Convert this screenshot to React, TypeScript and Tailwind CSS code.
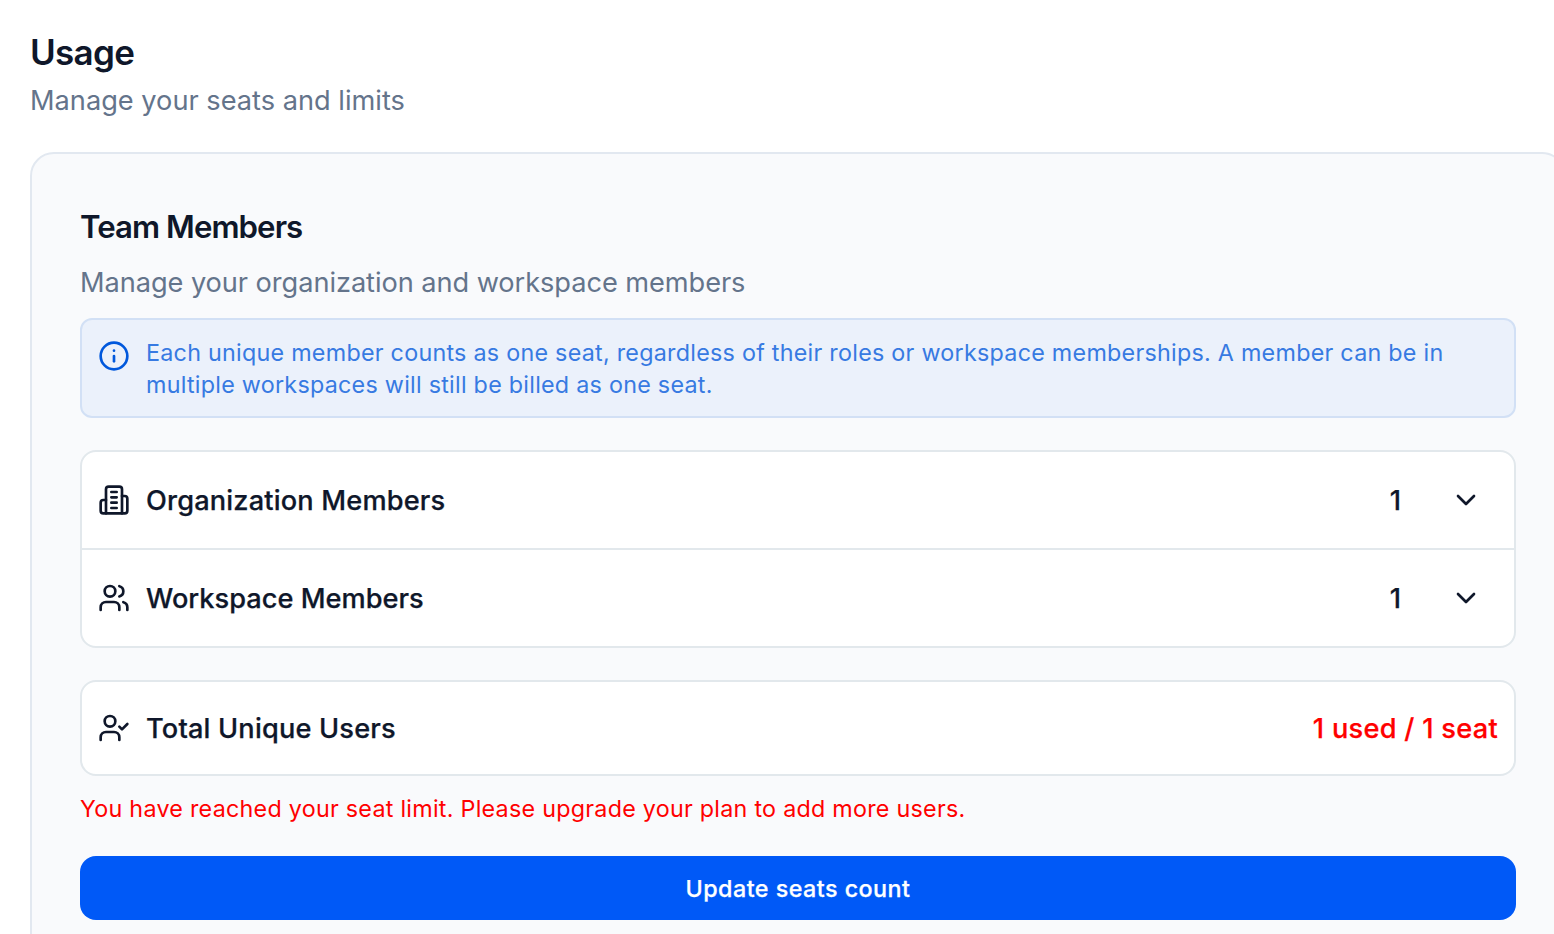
import type { ReactNode } from "react";
import { ChevronDown, Info, UserCheck, Users } from "lucide-react";

function OfficeIcon() {
  return (
    <svg className="size-8 shrink-0" viewBox="0 0 24 24" fill="none" stroke="currentColor" strokeWidth="2" strokeLinecap="round" strokeLinejoin="round">
      <path d="M6 22V4a2 2 0 0 1 2-2h8a2 2 0 0 1 2 2v18Z" />
      <path d="M6 12H4a2 2 0 0 0-2 2v6a2 2 0 0 0 2 2h2" />
      <path d="M18 9h2a2 2 0 0 1 2 2v9a2 2 0 0 1-2 2h-2" />
      <path d="M10 6h4M10 10h4M10 14h4M10 18h4" />
    </svg>
  );
}

function MemberRow({ icon, children }: { icon: ReactNode; children: ReactNode }) {
  return (
    <div className="flex h-24 items-center px-4">
      {icon}
      <div className="ml-4 mt-0.5 text-[27.2px] font-medium leading-10 [-webkit-text-stroke:0.25px]">{children}</div>
      <span className="ml-auto mr-[49px] mt-0.5 text-[27.2px] font-medium leading-10 [-webkit-text-stroke:0.25px]">1</span>
      <ChevronDown className="mr-4 size-8" strokeWidth={2} />
    </div>
  );
}

export default function App() {
  return (
    <main className="h-[934px] w-[1554px] overflow-hidden bg-white pl-[30px] pt-8 font-['Inter',sans-serif] text-[#0f172a]">
      <h1 className="text-[35px] font-semibold leading-10 tracking-[-0.7px]">Usage</h1>
      <p className="mt-[9px] text-[27.2px] leading-10 text-[#64748b]">Manage your seats and limits</p>
      <section className="mt-[31px] h-[900px] w-[1536px] rounded-3xl border-2 border-[#e2e8f0] bg-[#f9fafc] px-12 pt-12">
        <div className="w-[1436px]">
          <h2 className="mt-[3px] text-[31.2px] font-semibold leading-[44px] tracking-[-0.93px]">Team Members</h2>
          <p className="mt-[14px] text-[27.2px] leading-10 tracking-[-0.06px] text-[#64748b]">Manage your organization and workspace members</p>
          <div className="mt-[15px] flex h-[100px] rounded-xl border-2 border-[#d2e0f5] bg-[#ebf1fb] px-4 pt-4">
            <Info className="mt-[4px] size-8 shrink-0 text-[#0058dc]" />
            <p className="ml-4 mt-px whitespace-nowrap text-[23.3px] leading-8 tracking-[0.26px] text-[#377ae2]">
              Each unique member counts as one seat, regardless of their roles or workspace memberships. A member can be in
              <br />
              multiple workspaces will still be billed as one seat.
            </p>
          </div>
          <div className="mt-8 h-[198px] rounded-2xl border-2 border-[#e2e8ec] bg-white">
            <MemberRow icon={<OfficeIcon />}>
              <span className="tracking-[0.17px]">Organization Members</span>
            </MemberRow>
            <div className="h-0.5 bg-[#e2e8ec]" />
            <MemberRow icon={<Users className="size-8" />}>
              <span className="tracking-[0.02px]">Workspace Members</span>
            </MemberRow>
          </div>
          <div className="mt-8 flex h-24 items-center rounded-2xl border-2 border-[#e2e8ec] bg-white px-4">
            <UserCheck className="size-8" />
            <span className="ml-4 mt-0.5 text-[27.2px] font-medium tracking-[0.18px] [-webkit-text-stroke:0.25px]">Total Unique Users</span>
            <span className="ml-auto mt-0.5 text-[27.2px] font-medium tracking-[0.28px] text-[#ff0000] [-webkit-text-stroke:0.25px]">1 used / 1 seat</span>
          </div>
          <p className="mt-[17px] text-[23.3px] leading-8 tracking-[0.26px] text-[#ff0000]">
            You have reached your seat limit. Please upgrade your plan to add more users.
          </p>
          <button className="mt-[31px] flex h-16 w-full items-center justify-center rounded-2xl bg-[#0059f7] pt-0.5 text-[23.3px] font-medium tracking-[0.47px] text-white [-webkit-text-stroke:0.25px]">
            Update seats count
          </button>
        </div>
      </section>
    </main>
  );
}
